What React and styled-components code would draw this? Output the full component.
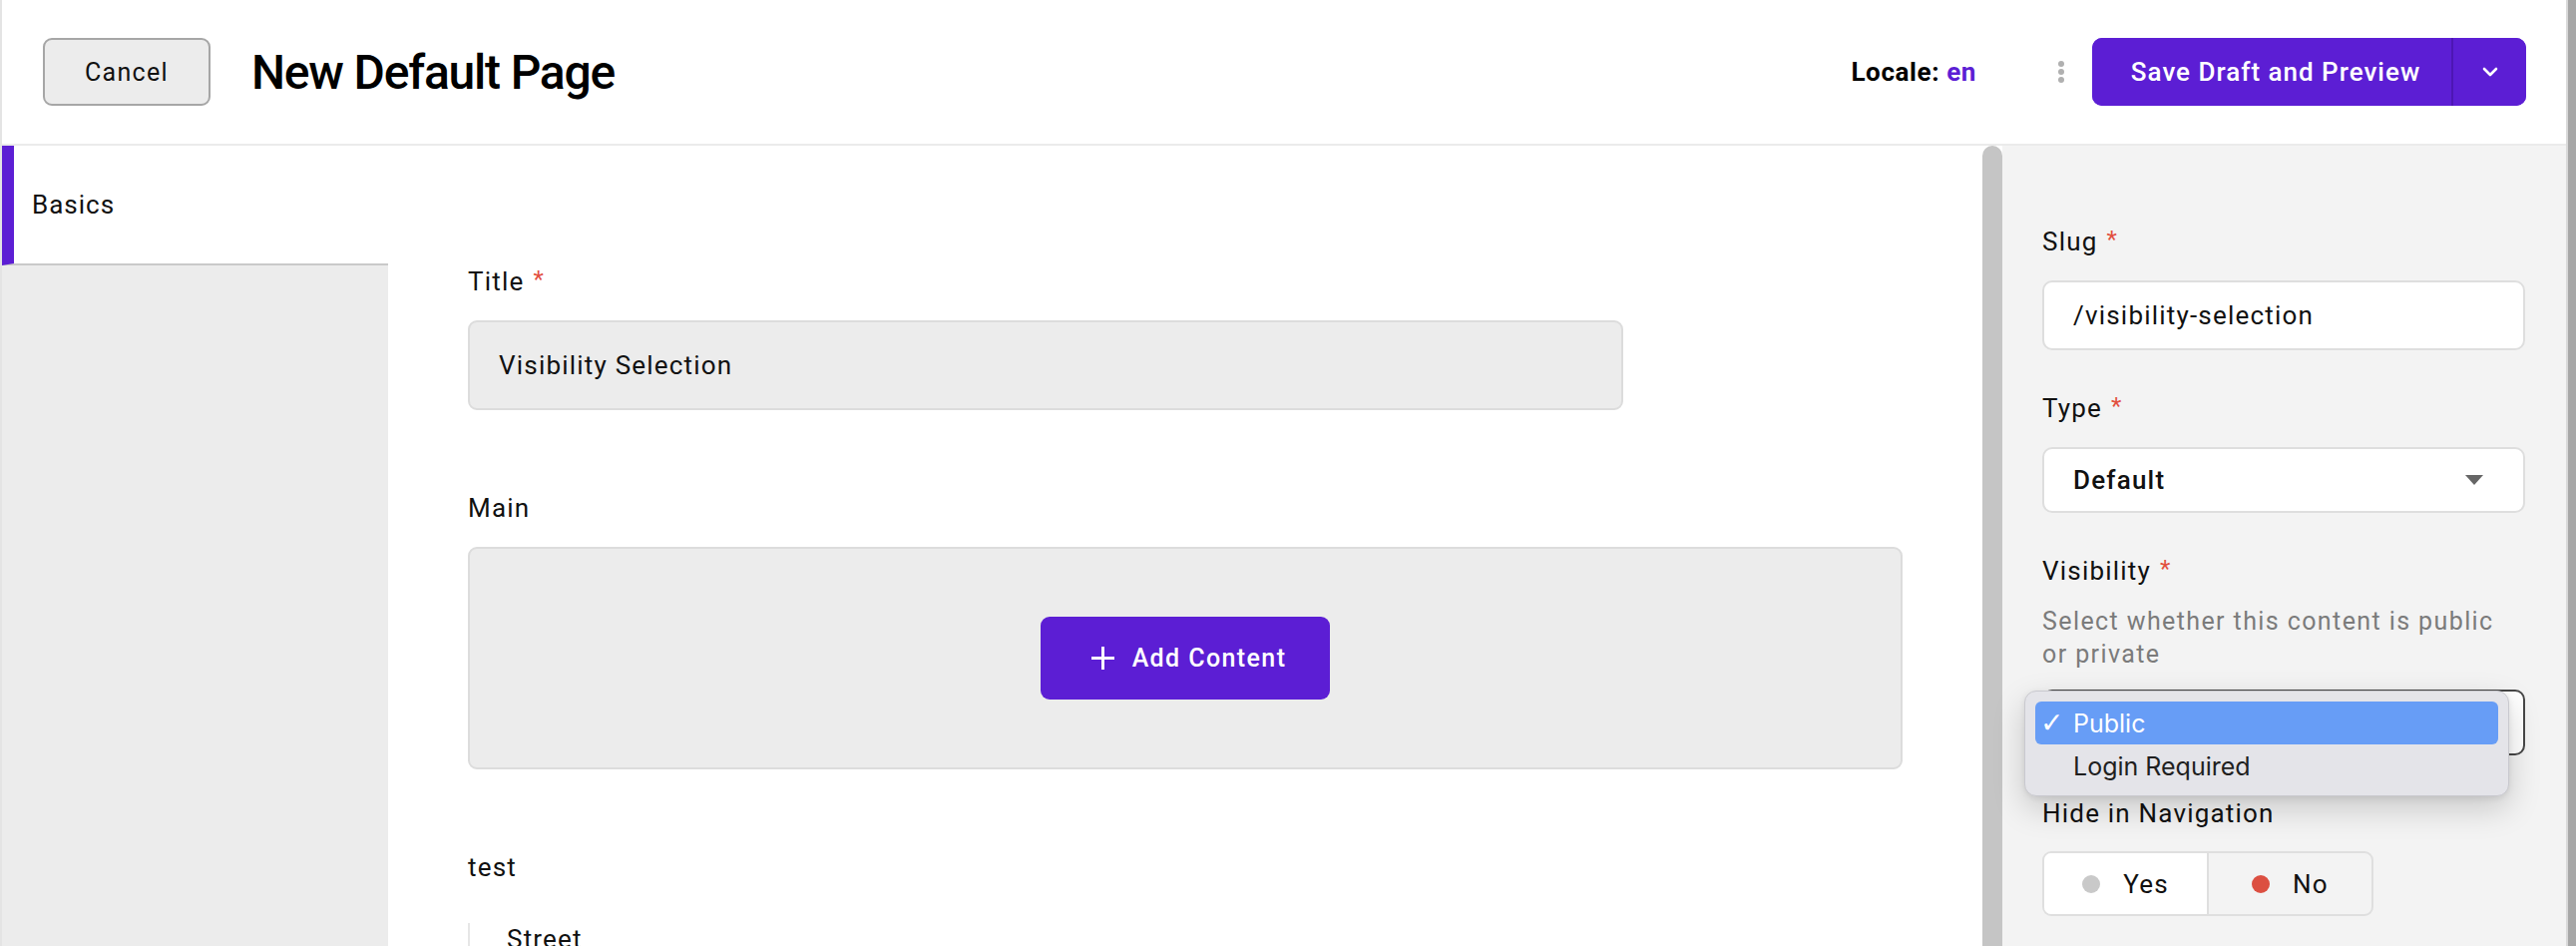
import React from "react";
import styled, { createGlobalStyle } from "styled-components";

const PURPLE = "#5c1ed4";
const RED = "#e2503f";

const GlobalStyle = createGlobalStyle`
  html, body { margin: 0; padding: 0; background: #ffffff; }
  body { font-family: Roboto, "Noto Sans", Arial, sans-serif; color: #111; }
  * { box-sizing: border-box; }
`;

const Page = styled.div`
  display: flex;
  width: 2582px;
  height: 948px;
  overflow: hidden;
  border-left: 2px solid #e4e4e4;
  background: #fff;
`;

const MainColumn = styled.div`
  flex: 1;
  display: flex;
  flex-direction: column;
  min-width: 0;
`;

const EdgeBar = styled.div`
  width: 10px;
  flex: none;
  background: #a7a7a7;
  border-left: 2px solid #d9d9d9;
`;

const Header = styled.header`
  height: 146px;
  flex: none;
  display: flex;
  align-items: center;
  padding: 0 40px 0 41px;
  border-bottom: 2px solid #ebebeb;
  background: #fff;
`;

const CancelButton = styled.button`
  width: 168px;
  height: 68px;
  border: 2px solid #a6a6a6;
  border-radius: 9px;
  background: #ececec;
  font-family: Roboto, Arial, sans-serif;
  font-size: 25px;
  letter-spacing: 1.3px;
  color: #111;
  padding: 0;
`;

const PageTitle = styled.h1`
  margin: 0 0 0 41px;
  font-size: 48px;
  font-weight: 500;
  letter-spacing: -1.2px;
  color: #000;
`;

const Spacer = styled.div`
  flex: 1;
`;

const Locale = styled.div`
  font-size: 26px;
  font-weight: 700;
  letter-spacing: 0.6px;
  color: #000;
  margin-right: 82px;
  span { color: ${PURPLE}; }
`;

const Kebab = styled.div`
  display: flex;
  flex-direction: column;
  gap: 2px;
  margin-right: 28px;
`;

const Dot = styled.span`
  width: 6px;
  height: 6px;
  border-radius: 50%;
  background: #b0b0b0;
`;

const SplitButton = styled.div`
  display: flex;
  height: 68px;
  border-radius: 10px;
  overflow: hidden;
  background: ${PURPLE};
`;

const SplitMain = styled.button`
  width: 362px;
  border: 0;
  background: ${PURPLE};
  color: #fff;
  font-family: Roboto, Arial, sans-serif;
  font-size: 26px;
  font-weight: 500;
  letter-spacing: 1px;
  padding: 0 0 0 8px;
  border-right: 2px solid #4d16b4;
`;

const SplitArrow = styled.button`
  width: 73px;
  border: 0;
  background: ${PURPLE};
  display: flex;
  align-items: center;
  justify-content: center;
  padding: 0;
`;

const Body = styled.div`
  flex: 1;
  display: flex;
  min-height: 0;
`;

const Sidebar = styled.nav`
  width: 387px;
  flex: none;
  background: #ececec;
`;

const Tab = styled.div`
  height: 120px;
  display: flex;
  align-items: center;
  padding-left: 18px;
  background: #fff;
  border-left: 12px solid ${(p) => (p.$active ? PURPLE : "transparent")};
  border-bottom: 2px solid #c9c9c9;
  font-size: 26px;
  font-weight: 400;
  letter-spacing: 1px;
  color: #111;
`;

const Content = styled.main`
  flex: 1;
  min-width: 0;
  padding: 120px 80px 0 80px;
  background: #fff;
`;

const Field = styled.div`
  margin-bottom: ${(p) => p.$gap ?? 82}px;
`;

const Label = styled.div`
  font-size: 26px;
  line-height: 32px;
  font-weight: 400;
  letter-spacing: 1.2px;
  color: #111;
  margin-bottom: ${(p) => p.$mb ?? 23}px;
`;

const Req = styled.span`
  color: ${RED};
  margin-left: 9px;
  font-size: 24px;
  line-height: 0;
  vertical-align: 3px;
`;

const GreyInput = styled.div`
  width: ${(p) => p.$width || "100%"};
  height: 90px;
  display: flex;
  align-items: center;
  padding-left: 29px;
  background: #ececec;
  border: 2px solid #dcdcdc;
  border-radius: 9px;
  font-size: 26px;
  font-weight: 400;
  letter-spacing: 1.2px;
  color: #111;
`;

const BlockArea = styled.div`
  height: 223px;
  display: flex;
  align-items: center;
  justify-content: center;
  background: #ececec;
  border: 2px solid #dcdcdc;
  border-radius: 9px;
`;

const AddButton = styled.button`
  width: 290px;
  height: 83px;
  display: flex;
  align-items: center;
  justify-content: center;
  gap: 17px;
  padding: 0 0 0 6px;
  border: 0;
  border-radius: 9px;
  background: ${PURPLE};
  color: #fff;
  font-family: Roboto, Arial, sans-serif;
  font-size: 25px;
  font-weight: 500;
  letter-spacing: 1.4px;
`;

const Group = styled.div`
  border-left: 2px solid #e6e6e6;
  padding-left: 37px;
  height: 60px;
`;

const ScrollThumb = styled.div`
  width: 20px;
  flex: none;
  background: #c5c5c5;
  border-radius: 10px 10px 0 0;
`;

const SidePanel = styled.aside`
  width: 565px;
  flex: none;
  background: #f3f3f3;
  padding: 80px 41px 0 40px;
`;

const SideField = styled.div`
  margin-bottom: 42px;
`;

const WhiteInput = styled.div`
  height: ${(p) => p.$h || 70}px;
  display: flex;
  align-items: center;
  justify-content: space-between;
  padding: 0 40px 0 29px;
  background: #fff;
  border: 2px solid ${(p) => (p.$focused ? "#474747" : "#dedede")};
  border-radius: 10px;
  font-size: 26px;
  font-weight: ${(p) => (p.$bold ? 500 : 400)};
  letter-spacing: 1.2px;
  color: #111;
`;

const Description = styled.div`
  max-width: 472px;
  font-size: 25px;
  line-height: 33px;
  letter-spacing: 1.4px;
  color: #7b7b7b;
  margin-bottom: 19px;
`;

const SelectWrap = styled.div`
  position: relative;
`;

const Menu = styled.div`
  position: absolute;
  top: 1px;
  left: -18px;
  width: 486px;
  padding: 10px 10px 8px 10px;
  background: #e4e4e9;
  border: 1px solid #c9c9cf;
  border-radius: 12px;
  box-shadow: 0 12px 32px rgba(0, 0, 0, 0.18), 0 2px 6px rgba(0, 0, 0, 0.08);
  z-index: 2;
`;

const MenuItem = styled.div`
  height: 43px;
  display: flex;
  align-items: center;
  border-radius: 6px;
  background: ${(p) => (p.$selected ? "#679df6" : "transparent")};
  color: ${(p) => (p.$selected ? "#fff" : "#1f1f1f")};
  font-family: Inter, Roboto, Arial, sans-serif;
  font-size: 25px;
`;

const Check = styled.span`
  width: 38px;
  padding-left: 5px;
  font-size: 28px;
  font-weight: 700;
  font-family: "DejaVu Sans", sans-serif;
`;

const RadioGroup = styled.div`
  display: inline-flex;
  height: 65px;
  border: 2px solid #dfdfdf;
  border-radius: 9px;
  overflow: hidden;
`;

const RadioOption = styled.div`
  width: ${(p) => p.$w}px;
  display: flex;
  align-items: center;
  justify-content: center;
  gap: 23px;
  background: ${(p) => (p.$white ? "#fff" : "transparent")};
  border-right: ${(p) => (p.$divider ? "2px solid #dfdfdf" : "0")};
  font-size: 26px;
  font-weight: 400;
  letter-spacing: 1.2px;
  color: #111;
`;

const RadioDot = styled.span`
  width: 18px;
  height: 18px;
  border-radius: 50%;
  background: ${(p) => p.$color};
`;

const ChevronDown = () => (
  <svg width="16" height="10" viewBox="0 0 16 10" fill="none">
    <path d="M2 2l6 6 6-6" stroke="#fff" strokeWidth="2.6" strokeLinecap="round" strokeLinejoin="round" />
  </svg>
);

const Plus = () => (
  <svg width="25" height="25" viewBox="0 0 25 25" fill="none">
    <path d="M12.5 1v23M1 12.5h23" stroke="#fff" strokeWidth="3" />
  </svg>
);

const Caret = () => (
  <svg width="18" height="10" viewBox="0 0 18 10">
    <path d="M0 0h18L9 10z" fill="#666" />
  </svg>
);

export default function App() {
  return (
    <>
      <GlobalStyle />
      <Page>
        <MainColumn>
          <Header>
            <CancelButton>Cancel</CancelButton>
            <PageTitle>New Default Page</PageTitle>
            <Spacer />
            <Locale>
              Locale: <span>en</span>
            </Locale>
            <Kebab>
              <Dot />
              <Dot />
              <Dot />
            </Kebab>
            <SplitButton>
              <SplitMain>Save Draft and Preview</SplitMain>
              <SplitArrow>
                <ChevronDown />
              </SplitArrow>
            </SplitButton>
          </Header>
          <Body>
            <Sidebar>
              <Tab $active>Basics</Tab>
            </Sidebar>
            <Content>
              <Field>
                <Label>
                  Title<Req>*</Req>
                </Label>
                <GreyInput $width="1158px">Visibility Selection</GreyInput>
              </Field>
              <Field>
                <Label>Main</Label>
                <BlockArea>
                  <AddButton>
                    <Plus />
                    Add Content
                  </AddButton>
                </BlockArea>
              </Field>
              <Field $gap={0}>
                <Label $mb={40}>test</Label>
                <Group>
                  <Label>Street</Label>
                </Group>
              </Field>
            </Content>
            <ScrollThumb />
            <SidePanel>
              <SideField>
                <Label>
                  Slug<Req>*</Req>
                </Label>
                <WhiteInput>/visibility-selection</WhiteInput>
              </SideField>
              <SideField>
                <Label>
                  Type<Req>*</Req>
                </Label>
                <WhiteInput $h={66} $bold>
                  Default
                  <Caret />
                </WhiteInput>
              </SideField>
              <SideField>
                <Label $mb={18}>
                  Visibility<Req>*</Req>
                </Label>
                <Description>Select whether this content is public or private</Description>
                <SelectWrap>
                  <WhiteInput $h={66} $focused />
                  <Menu>
                    <MenuItem $selected>
                      <Check>✓</Check>Public
                    </MenuItem>
                    <MenuItem>
                      <Check />Login Required
                    </MenuItem>
                  </Menu>
                </SelectWrap>
              </SideField>
              <SideField>
                <Label $mb={22}>Hide in Navigation</Label>
                <RadioGroup>
                  <RadioOption $w={165} $white $divider>
                    <RadioDot $color="#c9c9c9" />
                    Yes
                  </RadioOption>
                  <RadioOption $w={163}>
                    <RadioDot $color="#dc4f41" />
                    No
                  </RadioOption>
                </RadioGroup>
              </SideField>
            </SidePanel>
          </Body>
        </MainColumn>
        <EdgeBar />
      </Page>
    </>
  );
}
